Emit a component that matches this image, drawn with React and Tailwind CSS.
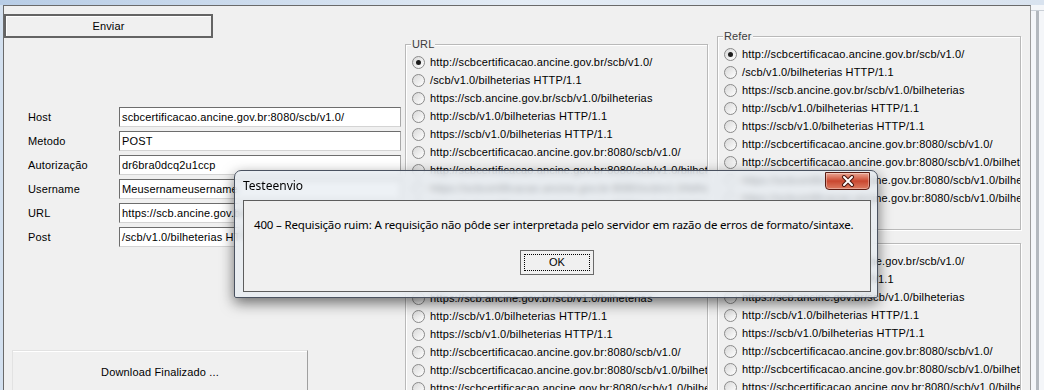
import React from 'react';

const ITEMS = [
  'http://scbcertificacao.ancine.gov.br/scb/v1.0/',
  '/scb/v1.0/bilheterias HTTP/1.1',
  'https://scb.ancine.gov.br/scb/v1.0/bilheterias',
  'http://scb/v1.0/bilheterias HTTP/1.1',
  'https://scb/v1.0/bilheterias HTTP/1.1',
  'http://scbcertificacao.ancine.gov.br:8080/scb/v1.0/',
  'http://scbcertificacao.ancine.gov.br:8080/scb/v1.0/bilheterias',
  'https://scbcertificacao.ancine.gov.br:8080/scb/v1.0/bilheterias',
  'https://scbcertificacao.ancine.gov.br:8080/scb/v1.0/bilheterias HTTP/1.1',
];

const FIELDS = [
  ['Host', 'scbcertificacao.ancine.gov.br:8080/scb/v1.0/'],
  ['Metodo', 'POST'],
  ['Autorização', 'dr6bra0dcq2u1ccp'],
  ['Username', 'Meusernameusername'],
  ['URL', 'https://scb.ancine.gov.br/scb/v1.0/bilheterias'],
  ['Post', '/scb/v1.0/bilheterias HTTP/1.1'],
];

function Radio({ checked }) {
  return (
    <span className="w-[13px] h-[13px] shrink-0 rounded-full border border-[#8a8a8a] bg-gradient-to-br from-[#d8d8d8] to-[#ffffff] flex items-center justify-center">
      {checked && <span className="w-[5px] h-[5px] rounded-full bg-[#1c1c1c]" />}
    </span>
  );
}

// group box, win forms style
function Group({ label, className }) {
  return (
    <div className={'shrink-0 flex flex-col border border-[#b9b9b9] shadow-[inset_1px_1px_0_#ffffff,1px_1px_0_#ffffff] ' + className}>
      {label ? (
        <span className="block w-fit -mt-[7px] ml-[5px] px-[1px] bg-[#f0f0f0] leading-[13px] text-[#3c3c3c]">
          {label}
        </span>
      ) : (
        <div className="h-[6px]" />
      )}
      <div className="pt-[2px] flex-1 overflow-hidden">
        {ITEMS.map((t, i) => (
          <div key={i} className="h-[18px] flex items-center pl-[6px] gap-[5px] whitespace-nowrap">
            <Radio checked={i === 0} />
            <span>{t}</span>
          </div>
        ))}
      </div>
    </div>
  );
}

export default function App() {
  return (
    <div className="relative w-[1044px] h-[390px] overflow-hidden bg-[#dde6f1] font-['Liberation_Sans',Arial,sans-serif] text-[11px] tracking-[0.15px] text-black">
      <div className="h-[5px] bg-gradient-to-r from-[#b8cde6] via-[#e4ecf5] to-[#d9e3ef]" />
      <div className="flex h-[385px]">
        <div className="w-[3px] bg-[#d3e0ef]" />

        {/* form client area */}
        <div className="w-[1028px] border-t border-l border-r border-t-[#6a6a6a] border-l-[#6a6a6a] border-r-[#9c9c9c] bg-[#f0f0f0] flex overflow-hidden">
          <div className="w-[398px] shrink-0 flex flex-col">
            <button className="mt-[8px] w-[209px] h-[24px] shrink-0 border-2 border-[#646464] shadow-[inset_1px_1px_0_#ffffff] bg-[#f0f0f0] flex items-center justify-center">
              Enviar
            </button>

            <div className="mt-[69px] flex flex-col gap-[4px] shrink-0">
              {FIELDS.map(([label, value]) => (
                <div key={label} className="flex items-center h-[20px]">
                  <span className="w-[115px] pl-[24px] shrink-0">{label}</span>
                  <div className="w-[282px] h-[20px] bg-white border border-t-[#6d6d6d] border-l-[#6d6d6d] border-b-[#d4d4d4] border-r-[#a8a8a8] pl-[2px] flex items-center overflow-hidden whitespace-nowrap">
                    {value}
                  </div>
                </div>
              ))}
            </div>

            <button className="mt-[103px] ml-[8px] w-[296px] h-[45px] shrink-0 border border-[#e2e2e2] border-r-[#a0a0a0] shadow-[inset_0_1px_0_#ffffff] bg-[#f0f0f0] flex items-start justify-center pt-[13px]">
              Download Finalizado ...
            </button>
          </div>

          <div className="ml-[3px] w-[303px] shrink-0 flex flex-col">
            <Group label="URL" className="mt-[38px] h-[194px]" />
            <Group className="mt-[6px] h-[200px]" />
          </div>

          <div className="ml-[9px] w-[304px] shrink-0 flex flex-col">
            <Group label="Refer" className="mt-[30px] h-[194px]" />
            <Group className="mt-[13px] h-[200px]" />
          </div>
        </div>

        <div className="flex-1 flex flex-col bg-[#f4f6f9]">
          <div className="h-[5px]" />
          <div className="flex-1 flex border-t border-[#c9cfd6]">
            <div className="w-[5px]" />
            <div className="w-[3px] bg-[#b3b8be]" />
          </div>
        </div>
      </div>

      {/* message box */}
      <div className="absolute left-[234px] top-[170px] w-[644px] h-[128px] rounded-t-[7px] rounded-b-[2px] border border-[#4a5260] bg-[#e6ebf1]/70 backdrop-blur-[3px] shadow-[0_5px_14px_rgba(0,0,0,0.55)] flex flex-col pl-[8px] pr-[6px] pb-[5px] tracking-normal">
        <div className="h-[29px] flex justify-between shrink-0">
          <span className="self-center font-['Noto_Sans',sans-serif] text-[12px] text-black">Testeenvio</span>
          <div className="mt-[1px] mr-[1px] w-[45px] h-[18px] rounded-b-[4px] border border-[#5a1c12] bg-gradient-to-b from-[#e9a593] via-[#c9472f] to-[#dc7a60] shadow-[inset_0_0_0_1px_rgba(255,255,255,0.35)] flex items-center justify-center">
            <svg width="14" height="12" viewBox="0 0 14 12">
              <path d="M3 2 L11 10 M11 2 L3 10" stroke="#4a1810" strokeWidth="4" strokeLinecap="round" />
              <path d="M3 2 L11 10 M11 2 L3 10" stroke="#ffffff" strokeWidth="2" strokeLinecap="round" />
            </svg>
          </div>
        </div>
        <div className="flex-1 bg-[#f0f0f0] border border-[#5d5d5d] flex flex-col">
          <p className="pl-[10px] pt-[16px] leading-[16px] font-['Noto_Sans',sans-serif] text-[11.5px] tracking-[-0.17px] text-black whitespace-nowrap">
            400 – Requisição ruim: A requisição não pôde ser interpretada pelo servidor em razão de erros de formato/sintaxe.
          </p>
          <div className="mt-[17px] flex justify-center">
            <button className="w-[74px] h-[25px] border border-[#6a6a6a] bg-[#f0f0f0] p-[3px] font-['Liberation_Sans',Arial,sans-serif] text-[11px]">
              <span className="w-full h-full border border-dotted border-black flex items-center justify-center">OK</span>
            </button>
          </div>
        </div>
      </div>
    </div>
  );
}
